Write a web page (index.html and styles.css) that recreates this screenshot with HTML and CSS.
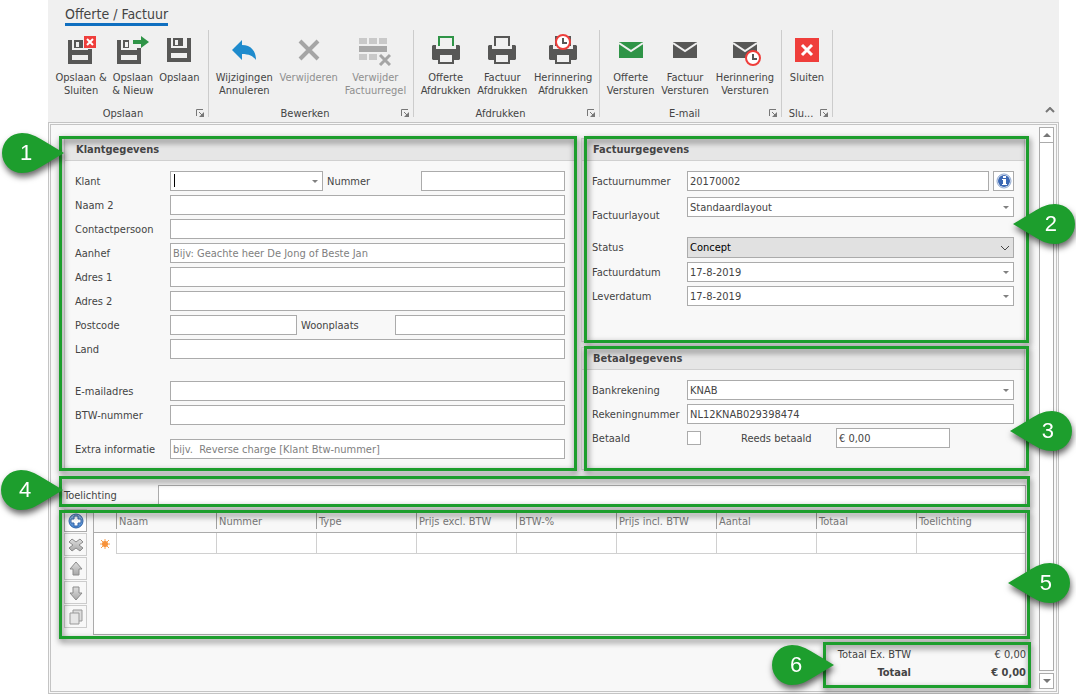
FILE: index.html
```html
<!DOCTYPE html>
<html lang="nl">
<head>
<meta charset="utf-8">
<title>Offerte / Factuur</title>
<link rel="stylesheet" href="styles.css">
</head>
<body>
<svg class="defs" aria-hidden="true">
  <defs>
    <symbol id="floppy" viewBox="0 0 24 24"><path fill="#575756" fill-rule="evenodd" d="M0 0h4v10h16V0h4v24H0ZM4 15h16v5H4ZM6 0h10v8H6ZM8 2h3v5H8Z"/></symbol>
    <symbol id="printer" viewBox="0 0 28 28"><path fill="#575756" fill-rule="evenodd" d="M1 9h3v4h20V9h3l1 1v13l-1 1h-5v4H6v-4H1l-1-1V10ZM8 19h12v7H8Z"/></symbol>
    <symbol id="mail" viewBox="0 0 24 16"><path d="M0 0h24v16H0Z" fill="currentColor"/><path d="M0 1l12 8 12-8" fill="none" stroke="#f0f0f0" stroke-width="2"/></symbol>
    <symbol id="clock" viewBox="0 0 16 16"><circle cx="8" cy="8" r="7" fill="#fff" stroke="#ef3e3b" stroke-width="2"/><path d="M8 4v5h4" fill="none" stroke="#575756" stroke-width="2"/></symbol>
    <symbol id="launch" viewBox="0 0 8 8"><path d="M.5 7V.5H7M3 3l3 3" fill="none" stroke="#777"/><path d="M8 3v5H3Z" fill="#777"/></symbol>
    <symbol id="pin" viewBox="0 0 62 40"><path fill="#1d9e2d" d="M62 20L42 8C34 3 28 0 20 0a20 20 0 0 0 0 40c8 0 14-3 22-8Z"/></symbol>
    <linearGradient id="steel" x1="0" y1="0" x2="0" y2="1"><stop offset="0" stop-color="#dedede"/><stop offset="1" stop-color="#a8a8a8"/></linearGradient>
    <linearGradient id="sky" x1="0" y1="0" x2="0" y2="1"><stop offset="0" stop-color="#a9c9ee"/><stop offset="1" stop-color="#3e82cf"/></linearGradient>
  </defs>
</svg>

<div class="app">
  <header class="ribbon">
    <div class="tabs"><button class="tab">Offerte / Factuur</button></div>
    <div class="groups">
      <section class="group group-save">
        <div class="tools">
          <button class="tool"><svg class="icon" viewBox="0 0 32 32"><use href="#floppy" x="3" y="6" width="24" height="24"/><path fill="#f0f0f0" d="M18 1h14v14H18Z"/><path fill="#ef3e3b" d="M19 2h12v12H19Z"/><path d="M22 5l6 6m0-6l-6 6" stroke="#fff" stroke-width="2"/></svg>Opslaan &amp;<br>Sluiten</button>
          <button class="tool"><svg class="icon" viewBox="0 0 32 32"><use href="#floppy" y="6" width="24" height="24"/><path fill="#f0f0f0" d="M12 4h20v10H12Z"/><path fill="#2f9447" d="M16 6h8V2l8 6-8 6v-4h-8Z"/></svg>Opslaan<br>&amp; Nieuw</button>
          <button class="tool"><svg class="icon" viewBox="0 0 32 32"><use href="#floppy" x="4" y="4" width="24" height="24"/></svg>Opslaan</button>
        </div>
        <div class="caption"><span>Opslaan</span><button class="launch" aria-label="Meer opslaan"><svg viewBox="0 0 8 8"><use href="#launch"/></svg></button></div>
      </section>
      <section class="group group-edit">
        <div class="tools">
          <button class="tool"><svg class="icon" viewBox="0 0 32 32"><path fill="#1e8bcd" d="M4 16L14 6v5c9 0 14 6 14 15-3-4-7-6-14-6v6Z"/></svg>Wijzigingen<br>Annuleren</button>
          <button class="tool muted" disabled><svg class="icon" viewBox="0 0 32 32"><path d="M7 7l18 18m0-18L7 25" stroke="#a5a5a5" stroke-width="4"/></svg>Verwijderen</button>
          <button class="tool muted" disabled><svg class="icon" viewBox="0 0 32 32"><path fill="#c9c9c9" d="M0 4h8v6H0zm10 0h8v6h-8zm10 0h8v6h-8zM0 20h8v6H0zm10 0h8v6h-8z"/><path fill="#a8a8a8" d="M0 12h28v6H0z"/><path d="M21 21l10 10m0-10L21 31" stroke="#a5a5a5" stroke-width="3"/></svg>Verwijder<br>Factuurregel</button>
        </div>
        <div class="caption"><span>Bewerken</span><button class="launch" aria-label="Meer bewerken"><svg viewBox="0 0 8 8"><use href="#launch"/></svg></button></div>
      </section>
      <section class="group group-print">
        <div class="tools">
          <button class="tool"><svg class="icon" viewBox="0 0 32 32"><use href="#printer" x="2" y="2" width="28" height="28"/><path d="M9 12V3h14v9" fill="none" stroke="#2f9447" stroke-width="2"/></svg>Offerte<br>Afdrukken</button>
          <button class="tool"><svg class="icon" viewBox="0 0 32 32"><use href="#printer" x="2" y="2" width="28" height="28"/><path d="M9 12V3h14v9" fill="none" stroke="#575756" stroke-width="2"/></svg>Factuur<br>Afdrukken</button>
          <button class="tool"><svg class="icon" viewBox="0 0 32 32"><use href="#printer" x="2" y="2" width="28" height="28"/><path d="M9 12V3h14v9" fill="none" stroke="#575756" stroke-width="2"/><use href="#clock" x="8" y="0" width="16" height="16"/></svg>Herinnering<br>Afdrukken</button>
        </div>
        <div class="caption"><span>Afdrukken</span><button class="launch" aria-label="Meer afdrukken"><svg viewBox="0 0 8 8"><use href="#launch"/></svg></button></div>
      </section>
      <section class="group group-mail">
        <div class="tools">
          <button class="tool"><svg class="icon icon-green" viewBox="0 0 32 32"><use href="#mail" x="4" y="8" width="24" height="16"/></svg>Offerte<br>Versturen</button>
          <button class="tool"><svg class="icon" viewBox="0 0 32 32"><use href="#mail" x="4" y="8" width="24" height="16"/></svg>Factuur<br>Versturen</button>
          <button class="tool"><svg class="icon" viewBox="0 0 32 32"><use href="#mail" x="4" y="8" width="24" height="16"/><use href="#clock" x="16" y="16" width="16" height="16"/></svg>Herinnering<br>Versturen</button>
        </div>
        <div class="caption"><span>E-mail</span><button class="launch" aria-label="Meer e-mail"><svg viewBox="0 0 8 8"><use href="#launch"/></svg></button></div>
      </section>
      <section class="group group-close">
        <div class="tools">
          <button class="tool"><svg class="icon" viewBox="0 0 32 32"><path fill="#ef3e3b" d="M4 4h24v24H4z"/><path d="M11 11l10 10m0-10L11 21" stroke="#fff" stroke-width="3"/></svg>Sluiten</button>
        </div>
        <div class="caption"><span>Slu...</span><button class="launch" aria-label="Meer sluiten"><svg viewBox="0 0 8 8"><use href="#launch"/></svg></button></div>
      </section>
      <button class="collapse" aria-label="Lint inklappen"><svg viewBox="0 0 10 6"><path d="M1 5l4-4 4 4" fill="none" stroke="#777" stroke-width="2"/></svg></button>
    </div>
  </header>

  <main class="workspace">
    <form class="form">
      <div class="panels">
        <section class="marked panel-left">
          <div class="panel">
            <h2>Klantgegevens</h2>
            <div class="rows">
              <div class="row"><label for="klant">Klant</label><div class="fields"><div class="combo w-klant"><input id="klant" type="text"><i class="caret"></i></div><label class="second" for="nummer">Nummer</label><input id="nummer" class="w-nummer" type="text"></div></div>
              <div class="row"><label for="naam2">Naam 2</label><input id="naam2" type="text"></div>
              <div class="row"><label for="contact">Contactpersoon</label><input id="contact" type="text"></div>
              <div class="row"><label for="aanhef">Aanhef</label><input id="aanhef" type="text" placeholder="Bijv: Geachte heer De Jong of Beste Jan"></div>
              <div class="row"><label for="adres1">Adres 1</label><input id="adres1" type="text"></div>
              <div class="row"><label for="adres2">Adres 2</label><input id="adres2" type="text"></div>
              <div class="row"><label for="postcode">Postcode</label><div class="fields"><input id="postcode" class="w-postcode" type="text"><label class="second" for="plaats">Woonplaats</label><input id="plaats" class="w-plaats" type="text"></div></div>
              <div class="row space-large"><label for="land">Land</label><input id="land" type="text"></div>
              <div class="row"><label for="mail-adres">E-mailadres</label><input id="mail-adres" type="text"></div>
              <div class="row space-medium"><label for="btw">BTW-nummer</label><input id="btw" type="text"></div>
              <div class="row"><label for="extra">Extra informatie</label><input id="extra" type="text" placeholder="bijv.  Reverse charge [Klant Btw-nummer]"></div>
            </div>
          </div>
          <div class="pin pin-1"><svg viewBox="0 0 62 40"><use href="#pin"/></svg><b>1</b></div>
        </section>
        <div class="panels-right">
          <section class="marked marked-right invoice">
            <div class="panel">
              <h2>Factuurgegevens</h2>
              <div class="rows">
                <div class="row space-small"><label for="factuurnr">Factuurnummer</label><div class="fields"><input id="factuurnr" type="text" value="20170002"><button type="button" class="info" aria-label="Informatie"><svg viewBox="0 0 16 16"><circle cx="8" cy="8" r="7" fill="#fff" stroke="#8aa5cf"/><circle cx="8" cy="8" r="6" fill="#3b68b4"/><path fill="#fff" d="M7 3h3v2H7zM6 6h4v5h1v1H6v-1h1V7H6z"/></svg></button></div></div>
                <div class="row row-tall"><label for="layout">Factuurlayout</label><div class="combo"><select id="layout"><option>Standaardlayout</option></select></div></div>
                <div class="row"><label for="status">Status</label><div class="combo combo-gray"><select id="status"><option>Concept</option></select><svg class="chevron" viewBox="0 0 10 6"><path d="M1 1l4 4 4-4" fill="none" stroke="#444"/></svg></div></div>
                <div class="row"><label for="fdatum">Factuurdatum</label><div class="combo"><input id="fdatum" type="text" value="17-8-2019"></div></div>
                <div class="row"><label for="ldatum">Leverdatum</label><div class="combo"><input id="ldatum" type="text" value="17-8-2019"></div></div>
              </div>
            </div>
            <div class="pin pin-2 pin-right"><svg viewBox="0 0 62 40"><use href="#pin"/></svg><b>2</b></div>
          </section>
          <section class="marked marked-right payment">
            <div class="panel">
              <h2>Betaalgegevens</h2>
              <div class="rows">
                <div class="row"><label for="bank">Bankrekening</label><div class="combo"><select id="bank"><option>KNAB</option></select></div></div>
                <div class="row"><label for="rekening">Rekeningnummer</label><input id="rekening" type="text" value="NL12KNAB029398474"></div>
                <div class="row"><label for="betaald">Betaald</label><div class="fields"><input id="betaald" type="checkbox"><label class="paid" for="reeds">Reeds betaald</label><input id="reeds" class="w-reeds" type="text" value="€ 0,00"></div></div>
              </div>
            </div>
            <div class="pin pin-3 pin-right"><svg viewBox="0 0 62 40"><use href="#pin"/></svg><b>3</b></div>
          </section>
        </div>
      </div>

      <section class="marked note">
        <label for="toelichting">Toelichting</label><input id="toelichting" type="text">
        <div class="pin pin-4"><svg viewBox="0 0 62 40"><use href="#pin"/></svg><b>4</b></div>
      </section>

      <section class="marked lines">
        <div class="line-tools">
          <button type="button" class="active" aria-label="Toevoegen"><svg viewBox="0 0 16 16"><circle cx="8" cy="8" r="7" fill="url(#sky)" stroke="#3465a8"/><path d="M6 3h4v3h3v4h-3v3H6v-3H3V6h3z" fill="#fff" stroke="#3465a8"/></svg></button>
          <button type="button" aria-label="Verwijderen"><svg viewBox="0 0 16 16"><path d="M4 2l4 3 4-3 3 3-4 3 4 3-3 3-4-3-4 3-3-3 4-3-4-3z" fill="url(#steel)" stroke="#8c8c8c"/></svg></button>
          <button type="button" aria-label="Omhoog"><svg viewBox="0 0 16 16"><path d="M8 1l6 7h-3v6H5V8H2z" fill="url(#steel)" stroke="#8c8c8c"/></svg></button>
          <button type="button" aria-label="Omlaag"><svg viewBox="0 0 16 16"><path d="M8 15L2 8h3V2h6v6h3z" fill="url(#steel)" stroke="#8c8c8c"/></svg></button>
          <button type="button" aria-label="Kopiëren"><svg viewBox="0 0 16 16"><path d="M5 1h9v11H5z" fill="#ddd" stroke="#999"/><path d="M2 4h9v11H2z" fill="#e6e6e6" stroke="#999"/></svg></button>
        </div>
        <div class="grid">
          <table>
            <thead><tr><th class="marker"></th><th>Naam</th><th>Nummer</th><th>Type</th><th>Prijs excl. BTW</th><th>BTW-%</th><th>Prijs incl. BTW</th><th>Aantal</th><th>Totaal</th><th class="last">Toelichting</th></tr></thead>
            <tbody><tr><td class="marker"><svg viewBox="0 0 10 10"><path d="M5 0v10M0 5h10M1 1l8 8M9 1L1 9" stroke="#f9a050"/><circle cx="5" cy="5" r="3" fill="#f7923a"/></svg></td><td></td><td></td><td></td><td></td><td></td><td></td><td></td><td></td><td></td></tr></tbody>
          </table>
        </div>
        <div class="pin pin-5 pin-right"><svg viewBox="0 0 62 40"><use href="#pin"/></svg><b>5</b></div>
      </section>

      <section class="marked totals">
        <dl>
          <div><dt>Totaal Ex. BTW</dt><dd>€ 0,00</dd></div>
          <div class="grand"><dt>Totaal</dt><dd>€ 0,00</dd></div>
        </dl>
        <div class="pin pin-6"><svg viewBox="0 0 62 40"><use href="#pin"/></svg><b>6</b></div>
      </section>
    </form>

    <div class="scroll">
      <button type="button" aria-label="Omhoog schuiven"><svg viewBox="0 0 8 5"><path d="M4 0l4 4H0z" fill="#777"/></svg></button>
      <div class="track"></div>
      <button type="button" aria-label="Omlaag schuiven"><svg viewBox="0 0 8 5"><path d="M4 4L0 0h8z" fill="#777"/></svg></button>
    </div>
  </main>
</div>
</body>
</html>
```

FILE: styles.css
```css
* { box-sizing: border-box; }

body {
  margin: 0;
  background: #fff;
  color: #444;
  font: 11px/13px "DejaVu Sans Condensed", "DejaVu Sans", sans-serif;
}

button, input, select { font: inherit; color: inherit; }
button { padding: 0; border: 0; background: none; white-space: nowrap; }
svg { display: block; }
.defs { position: absolute; width: 0; height: 0; }

.app {
  display: flex;
  flex-direction: column;
  min-height: 100vh;
  margin: 0 17px 0 48px;
}

/* Ribbon */
.ribbon { padding-bottom: 5px; background: #f0f0f0; }
.tabs { padding: 5px 0 4px 17px; }
.tab {
  display: block;
  border-bottom: 3px solid #0f6fc0;
  font-size: 14px;
  line-height: 18px;
}
.groups { display: flex; padding-left: 2px; }
.group {
  display: flex;
  flex-direction: column;
  height: 87px;
  border-right: 1px solid #ccc;
}
.group-save { width: 159px; }
.group-edit { width: 205px; }
.group-print { width: 186px; }
.group-mail { width: 182px; }
.group-close { width: 51px; }
.tools { display: flex; flex: 1; justify-content: space-evenly; }
.group-save .tools { padding-right: 3px; }
.tool { display: flex; flex-direction: column; align-items: center; justify-content: flex-start; padding-top: 4px; }
.tool.muted { color: #8f8f8f; }
.icon { width: 32px; height: 32px; margin-bottom: 5px; color: #575756; }
.icon-green { color: #2f9447; }
.caption { display: flex; align-items: center; height: 8px; padding-right: 4px; }
.caption span { flex: 1; text-align: center; }
.launch svg { width: 8px; height: 8px; }
.collapse { align-self: flex-end; margin: 0 4px 4px auto; }
.collapse svg { width: 10px; height: 6px; }

/* Workspace */
.workspace {
  display: flex;
  flex: 1;
  border: 3px double #c4c4c4;
  background: #f8f8f8;
}
.form { flex: 1; min-width: 0; padding: 11px 9px 0 8px; }

.marked { position: relative; }
.marked::after {
  content: "";
  position: absolute;
  inset: 0;
  border: 3px solid #1d9e2d;
  filter: drop-shadow(1px 3px 3px rgba(0, 0, 0, .6));
  pointer-events: none;
}
.marked-right::after { left: 3px; }

.panels { display: grid; grid-template-columns: minmax(0, 518fr) minmax(0, 448fr); gap: 4px; margin-right: 1px; }
.panels-right { display: flex; flex-direction: column; gap: 3px; }
.panel-left { padding: 2px 1px 2px 5px; }
.invoice { flex: 1; padding: 2px 4px 1px 0; }
.payment { height: 125px; padding: 1px 4px 1px 0; }
.panel { height: 100%; border: 1px solid #d0d0d0; }
.panel h2 {
  margin: 0;
  padding: 4px 11px;
  border-bottom: 1px solid #d0d0d0;
  background: #e6e6e6;
  font-size: 11px;
  line-height: 13px;
}
.rows { display: flex; flex-direction: column; gap: 4px; padding: 10px 10px 9px; }
.row { display: grid; grid-template-columns: 95px minmax(0, 1fr); align-items: center; }
.space-small { padding-bottom: 2px; }
.space-medium { padding-bottom: 10px; }
.space-large { padding-bottom: 18px; }
.row-tall { min-height: 36px; }
.row-tall .combo { align-self: start; }
.fields { display: flex; align-items: center; gap: 4px; }
.second { flex: none; }

input[type="text"], select {
  display: block;
  width: 100%;
  min-width: 0;
  height: 20px;
  padding: 0 2px;
  border: 1px solid #ababab;
  border-radius: 0;
  outline: 0;
  background: #fff;
  appearance: none;
}
input::placeholder { color: #808080; opacity: 1; white-space: pre; }
.fields .w-klant { flex: none; width: 153px; }
.fields .w-nummer { flex: none; width: 144px; margin-left: auto; }
.fields .w-postcode { flex: none; width: 127px; }
.fields .w-plaats { flex: none; width: 170px; margin-left: auto; }
.fields .w-reeds { width: 114px; }
.paid { width: 91px; margin-left: 36px; }
input[type="checkbox"] {
  flex: none;
  width: 14px;
  height: 14px;
  margin: 0;
  border: 1px solid #ababab;
  background: #fff;
  appearance: none;
}

.combo { position: relative; }
.combo::after {
  content: "";
  position: absolute;
  top: 9px;
  right: 5px;
  border: 3px solid transparent;
  border-top-color: #808080;
  border-bottom: 0;
}
.combo-gray::after { display: none; }
.combo-gray select { height: 21px; background: #e1e1e1; color: #000; }
.chevron { position: absolute; top: 8px; right: 4px; width: 10px; height: 6px; }
.caret { position: absolute; top: 3px; left: 4px; width: 1px; height: 13px; background: #000; }
.info { display: grid; flex: none; place-items: center; width: 21px; height: 20px; border: 1px solid #ababab; background: #fff; }
.info svg { width: 16px; height: 16px; }

/* Note line */
.note {
  display: grid;
  grid-template-columns: 94px minmax(0, 1fr);
  align-items: center;
  margin-top: 5px;
  padding: 9px 4px 1px 5px;
}
.note input { height: 21px; }

/* Invoice lines */
.lines { display: flex; gap: 6px; height: 129px; margin-top: 3px; padding: 0 4px 4px 5px; }
.line-tools { display: flex; flex-direction: column; gap: 1px; width: 23px; margin-top: -1px; }
.line-tools button { display: grid; place-items: center; height: 23px; border: 1px solid #ccc; }
.line-tools .active { border-color: #ababab; background: #fff; }
.line-tools svg { width: 16px; height: 16px; }
.grid { flex: 1; min-width: 0; border: 1px solid #ababab; background: #fff; }
table { width: 100%; border-collapse: separate; border-spacing: 0; table-layout: fixed; }
th {
  width: 100px;
  height: 22px;
  padding: 0 3px;
  border-bottom: 1px solid #ababab;
  background: linear-gradient(#a0a0a0, #a0a0a0) left top / 1px 18px no-repeat #f8f8f8;
  color: #777;
  font-weight: normal;
  text-align: left;
  white-space: nowrap;
}
th.marker { width: 22px; background: #f8f8f8; }
th.last { width: auto; }
td { height: 21px; padding: 0; border-bottom: 1px solid #d0d0d0; border-left: 1px solid #d0d0d0; }
td.marker { border: 0; }
td svg { width: 10px; height: 10px; margin: 0 auto; }

/* Totals */
.totals { width: 208px; margin: 3px -1px 3px auto; padding: 4px 5px 6px 13px; }
.totals dl { margin: 0; }
.totals dl div { display: grid; grid-template-columns: 75px 1fr; text-align: right; line-height: 18px; white-space: nowrap; }
.totals dd { margin: 0; }
.grand { font-weight: bold; }

/* Numbered markers lying over the form */
.pin {
  position: absolute;
  z-index: 2;
  width: 62px;
  height: 40px;
  filter: drop-shadow(1px 4px 3px rgba(0, 0, 0, .6));
  color: #fff;
  font: 22px/40px "Liberation Sans", Arial, sans-serif;
}
.pin svg { width: 62px; height: 40px; }
.pin b { position: absolute; top: 0; left: 18px; font-weight: normal; }
.pin-right svg { transform: scaleX(-1); }
.pin-right b { right: 18px; left: auto; }
.pin-1 { top: -3px; left: -57px; }
.pin-2 { top: 68px; right: -46px; }
.pin-3 { top: 65px; right: -43px; }
.pin-4 { top: -6px; left: -58px; }
.pin-5 { top: 53px; right: -40px; }
.pin-6 { top: 3px; left: -51px; }

/* Scroll bar */
.scroll { display: flex; flex-direction: column; width: 17px; padding: 2px 2px 2px 0; }
.scroll button { display: grid; place-items: center; height: 16px; border: 1px solid #ababab; background: #fff; }
.scroll svg { width: 8px; height: 5px; }
.track { flex: 1; margin-bottom: 2px; border: 1px solid #ababab; border-top: 0; background: #fff; }
```
